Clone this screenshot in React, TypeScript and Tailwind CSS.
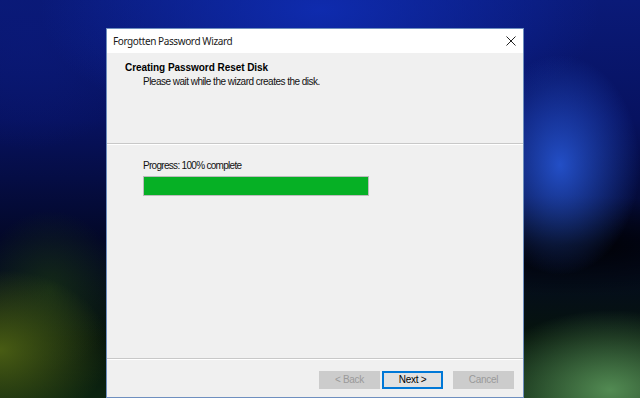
import React from 'react';

const Desktop: React.FC<{ children: React.ReactNode }> = ({ children }) => (
    <div
        className="relative w-[640px] h-[398px] overflow-hidden bg-[#03092a]"
        style={{
            backgroundImage: [
                'radial-gradient(ellipse 80px 110px at 560px 165px, rgba(40,90,220,0.85), rgba(40,90,220,0) 100%)',
                'radial-gradient(ellipse 130px 80px at 610px 390px, rgba(90,150,90,0.9), rgba(90,150,90,0) 100%)',
                'radial-gradient(ellipse 110px 80px at 0px 350px, rgba(80,100,20,0.9), rgba(80,100,20,0) 100%)',
                'radial-gradient(ellipse 70px 80px at 50px 290px, rgba(30,60,20,0.6), rgba(30,60,20,0) 100%)',
                'radial-gradient(ellipse 200px 50px at 570px 245px, rgba(0,0,0,0.9), rgba(0,0,0,0) 100%)',
                'radial-gradient(ellipse 280px 130px at 320px 10px, rgba(15,45,180,0.9), rgba(15,45,180,0) 100%)',
                'radial-gradient(ellipse 120px 120px at 30px 30px, rgba(10,25,120,0.8), rgba(10,25,120,0) 100%)',
                'linear-gradient(180deg, #0a1a78 0%, #071260 30%, #030828 60%, #06140c 85%, #0c2410 100%)',
            ].join(','),
        }}
    >
        {children}
    </div>
);

const WinButton: React.FC<{ label: string; disabled?: boolean; primary?: boolean }> = ({ label, disabled, primary }) => (
    <button
        className={`w-[61px] h-[18px] flex items-center justify-center text-[10px] leading-none tracking-[-0.3px] ${
            disabled
                ? 'bg-[#cccccc] border border-[#cccccc] text-[#9a9a9a]'
                : primary
                ? 'bg-[#e1e1e1] border-2 border-[#0078d7] text-black'
                : 'bg-[#e1e1e1] border border-[#adadad] text-black'
        }`}
    >
        {label}
    </button>
);

export default function App() {
    return (
        <Desktop>
            <div className="absolute left-[106px] top-[28px] w-[418px] h-[370px] border border-[#6e8fbf] bg-[#f0f0f0] flex flex-col font-['Liberation_Sans',Arial,sans-serif]">
                {/* title bar */}
                <div className="h-[24px] bg-white flex items-center justify-between pl-[6px] pr-[7px] shrink-0">
                    <span className="text-[10px] text-[#1a1a1a] font-['Noto_Sans','Open_Sans',sans-serif] tracking-[-0.4px]">
                        Forgotten Password Wizard
                    </span>
                    <svg width="10" height="10" viewBox="0 0 10 10" className="text-[#222]">
                        <path d="M0.5 0.5 L9.5 9.5 M9.5 0.5 L0.5 9.5" stroke="currentColor" strokeWidth="1" />
                    </svg>
                </div>

                {/* header */}
                <div className="h-[90px] shrink-0 pl-[18px] pt-[9px]">
                    <div className="text-[10px] font-bold text-black tracking-[-0.05px] leading-[12px]">
                        Creating Password Reset Disk
                    </div>
                    <div className="text-[10px] text-[#111] pl-[18px] tracking-[-0.52px] leading-[13px] mt-[1px]">
                        Please wait while the wizard creates the disk.
                    </div>
                </div>
                <div className="h-[2px] shrink-0 border-t border-[#c8c8c8] border-b border-b-white" />

                {/* body */}
                <div className="flex-1 pl-[36px] pt-[15px]">
                    <div className="text-[10px] text-[#111] tracking-[-0.7px] leading-[12px]">Progress: 100% complete</div>
                    <div className="mt-[4px] w-[226px] h-[20px] border border-[#bcbcbc] bg-[#e6e6e6]">
                        <div className="h-full bg-[#06b025]" style={{ width: '100%' }} />
                    </div>
                </div>

                {/* footer */}
                <div className="h-[2px] shrink-0 border-t border-[#c8c8c8] border-b border-b-white" />
                <div className="h-[37px] shrink-0 flex items-start justify-end pt-[11px] pr-[9px]">
                    <div className="flex">
                        <WinButton label="< Back" disabled />
                        <div className="w-[2px]" />
                        <WinButton label="Next >" primary />
                        <div className="w-[10px]" />
                        <WinButton label="Cancel" disabled />
                    </div>
                </div>
            </div>
        </Desktop>
    );
}
